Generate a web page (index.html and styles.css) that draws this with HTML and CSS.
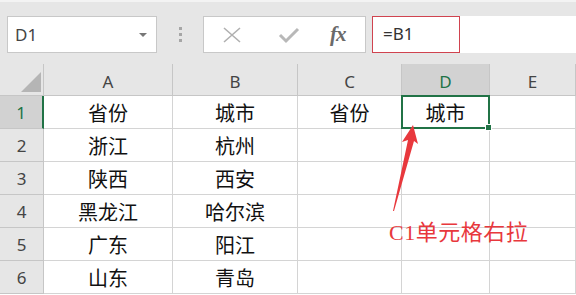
FILE: index.html
```html
<!DOCTYPE html>
<html lang="zh">
<head>
  <meta charset="UTF-8" />
  <title>单元格右拉</title>
  <link rel="stylesheet" href="styles.css">
</head>
<body>

<div class="toolbar">
  <div class="name-box">
    <span>D1</span>
    <span class="drop"></span>
  </div>
  <div class="dots"><i></i><i></i><i></i></div>
  <div class="fx-box">
    <svg class="ic" width="57" height="20" viewBox="0 0 57 20">
      <path d="M20 3 L36 17 M36 3 L20 17" stroke="#b0b0b0" stroke-width="1.6" fill="none"/>
    </svg>
    <svg class="ic" width="57" height="20" viewBox="0 0 57 20">
      <path d="M19 10 L25 16 L37 4" stroke="#b8b8b8" stroke-width="3" fill="none"/>
    </svg>
    <span class="ic-fx">fx</span>
  </div>
  <div class="formula">
    <div class="formula-text">=B1</div>
  </div>
</div>

<div class="sheet">
  <div class="corner"><span class="tri"></span></div>
  <div class="col-h">A</div>
  <div class="col-h">B</div>
  <div class="col-h">C</div>
  <div class="col-h active">D</div>
  <div class="col-h">E</div>

  <div class="row-h active">1</div>
  <div class="cell">省份</div>
  <div class="cell">城市</div>
  <div class="cell">省份</div>
  <div class="cell selected">城市<span class="handle"></span></div>
  <div class="cell"></div>

  <div class="row-h">2</div>
  <div class="cell">浙江</div>
  <div class="cell">杭州</div>
  <div class="cell"></div><div class="cell"></div><div class="cell"></div>

  <div class="row-h">3</div>
  <div class="cell">陕西</div>
  <div class="cell">西安</div>
  <div class="cell"></div><div class="cell"></div><div class="cell"></div>

  <div class="row-h">4</div>
  <div class="cell">黑龙江</div>
  <div class="cell">哈尔滨</div>
  <div class="cell"></div><div class="cell"></div><div class="cell"></div>

  <div class="row-h">5</div>
  <div class="cell">广东</div>
  <div class="cell">阳江</div>
  <div class="cell"></div><div class="cell"></div><div class="cell"></div>

  <div class="row-h">6</div>
  <div class="cell">山东</div>
  <div class="cell">青岛</div>
  <div class="cell"></div><div class="cell"></div><div class="cell"></div>

  <!-- annotation on top of the grid -->
  <svg class="arrow" width="32" height="90" viewBox="0 0 32 90">
    <polygon points="23,0 28,19 24,16 4,86 3,86 18,15 12,17" fill="#e8383d"/>
  </svg>
  <div class="note">C1单元格右拉</div>
</div>

</body>
</html>
```

FILE: styles.css
```css
* {
  margin: 0; padding: 0; box-sizing: border-box;
}

body {
  background: #fff;
  font-family: 'Noto Sans CJK SC', sans-serif;
  width: 576px;
  height: 295px;
  overflow: hidden;
}

.toolbar {
  height: 64px;
  background: #e6e6e6;
  border-top: 2px solid #f3f3f3;
  display: flex;
  align-items: flex-start;
  padding-top: 14px;
  padding-left: 7px;
}

.name-box {
  width: 150px;
  height: 37px;
  background: #fff;
  border: 1px solid #c8c8c8;
  display: flex;
  align-items: center;
  justify-content: space-between;
  padding: 0 9px 0 7px;
  font-family: 'Noto Sans', sans-serif;
  font-size: 17px;
  color: #444;
}

.drop {
  width: 0; height: 0;
  border-left: 4px solid transparent;
  border-right: 4px solid transparent;
  border-top: 4px solid #777;
}

.dots {
  width: 46px;
  height: 37px;
  display: flex;
  flex-direction: column;
  align-items: center;
  justify-content: center;
  gap: 3px;
}

.dots i {
  width: 3px;
  height: 3px;
  background: #a6a6a6;
}

.fx-box {
  width: 163px;
  height: 37px;
  background: #fff;
  border: 1px solid #c8c8c8;
  display: flex;
  align-items: center;
}

.ic {
  display: block;
}

.ic-fx {
  color: #6a6a6a;
  font-family: 'Liberation Serif', serif;
  font-style: italic;
  font-weight: bold;
  font-size: 21px;
  margin-left: 12px;
  letter-spacing: -1px;
}

.formula {
  flex: 1;
  height: 37px;
  margin-left: 6px;
  background: #fff;
}

.formula-text {
  width: 88px;
  height: 37px;
  border: 1px solid #d0434f;
  font-family: 'Noto Sans', sans-serif;
  font-size: 17px;
  color: #333;
  padding-left: 10px;
  line-height: 34px;
}

.sheet {
  position: relative;
  display: grid;
  grid-template-columns: 44px 129px 125px 104px 88px 86px;
  grid-template-rows: 32px repeat(6, 33px);
}

.corner, .col-h, .row-h {
  background: #e6e6e6;
  color: #444;
  font-family: 'Noto Sans', sans-serif;
  font-size: 17px;
  display: flex;
  align-items: center;
  justify-content: center;
  border-right: 1px solid #c6c6c6;
  border-bottom: 1px solid #c6c6c6;
}

.corner {
  position: relative;
}

.tri {
  position: absolute;
  right: 2px;
  bottom: 3px;
  width: 0; height: 0;
  border-left: 20px solid transparent;
  border-bottom: 20px solid #b5b5b5;
}

.col-h.active, .row-h.active {
  background: #d2d2d2;
  color: #217346;
}

.row-h.active {
  border-right: 2px solid #217346;
}

.col-h {
  padding-top: 4px;
}

.cell {
  border-right: 1px solid #d4d4d4;
  border-bottom: 1px solid #d4d4d4;
  display: flex;
  align-items: center;
  justify-content: center;
  font-size: 20px;
  color: #111;
}

.cell.selected {
  position: relative;
  border: 2px solid #217346;
  margin: -1px 0 0 -1px;
}

.handle {
  position: absolute;
  right: -4px;
  bottom: -4px;
  width: 7px;
  height: 7px;
  background: #217346;
  border: 1px solid #fff;
}

.arrow {
  position: absolute;
  left: 390px;
  top: 61px;
}

.note {
  position: absolute;
  left: 389px;
  top: 150px;
  font-family: 'Liberation Serif', 'Noto Sans CJK SC', serif;
  font-size: 22px;
  color: #e8383d;
  letter-spacing: 0.5px;
}
```
